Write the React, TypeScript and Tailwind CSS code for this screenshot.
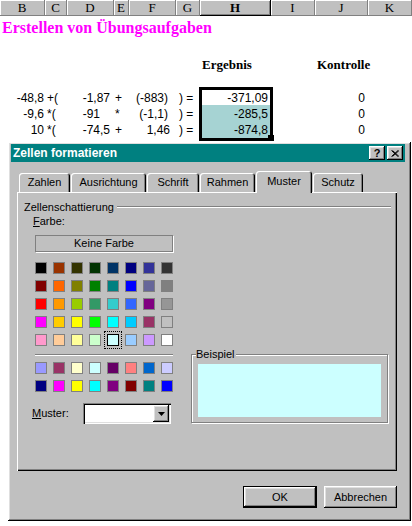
const palette = [
  ["#000000", "#993300", "#333300", "#003300", "#003366", "#000080", "#333399", "#333333"],
  ["#800000", "#ff6600", "#808000", "#008000", "#008080", "#0000ff", "#666699", "#808080"],
  ["#ff0000", "#ff9900", "#99cc00", "#339966", "#33cccc", "#3366ff", "#800080", "#969696"],
  ["#ff00ff", "#ffcc00", "#ffff00", "#00ff00", "#00ffff", "#00ccff", "#993366", "#c0c0c0"],
  ["#ff99cc", "#ffcc99", "#ffff99", "#ccffcc", "#ccffff", "#99ccff", "#cc99ff", "#ffffff"],
];

const extra = [
  ["#9999ff", "#993366", "#ffffcc", "#ccffff", "#660066", "#ff8080", "#0066cc", "#ccccff"],
  ["#000080", "#ff00ff", "#ffff00", "#00ffff", "#800080", "#800000", "#008080", "#0000ff"],
];

const raised =
  "shadow-[inset_-1px_-1px_#000,inset_1px_1px_#fff,inset_-2px_-2px_#808080,inset_2px_2px_#dfdfdf]";

const rows = [
  { h: "h-[15px]", b: "-48,8", c: "+(", d: "-1,87", dPad: "pr-[4px]", e: "+", f: "(-883)", fPad: "pr-[8px]", res: "-371,09", fill: "bg-white" },
  { h: "h-[17px]", b: "-9,6", c: "*(", d: "-91", dPad: "pr-[14px]", e: "*", f: "(-1,1)", fPad: "pr-[8px]", res: "-285,5", fill: "bg-[#a6d3d3]" },
  { h: "h-[16px]", b: "10", c: "*(", d: "-74,5", dPad: "pr-[4px]", e: "+", f: "1,46", fPad: "pr-[6px]", res: "-874,8", fill: "bg-[#a6d3d3]" },
];

function HeaderCell({ label, w, active }: { label: string; w: string; active?: boolean }) {
  return (
    <div
      className={`${w} flex h-[16px] items-center justify-center border-r border-b text-[13px] ${
        active
          ? "border-black font-bold shadow-[inset_1px_1px_#fff,inset_-1px_-1px_#808080]"
          : "border-[#808080] shadow-[inset_1px_1px_#fff]"
      }`}
    >
      {label}
    </div>
  );
}

function Sheet() {
  return (
    <div className="font-['Liberation_Serif',serif] text-black">
      <div className="flex h-[16px] bg-[#c0c0c0]">
        <HeaderCell label="B" w="w-[45px]" />
        <HeaderCell label="C" w="w-[22px]" />
        <HeaderCell label="D" w="w-[47px]" />
        <HeaderCell label="E" w="w-[15px]" />
        <HeaderCell label="F" w="w-[47px]" />
        <HeaderCell label="G" w="w-[24px]" />
        <HeaderCell label="H" w="w-[71px]" active />
        <HeaderCell label="I" w="w-[44px]" />
        <HeaderCell label="J" w="w-[53px]" />
        <HeaderCell label="K" w="w-[44px]" />
      </div>
      <div className="flex h-[23px] items-center pl-[2px] text-[16px] font-bold text-[#ff00ff]">
        Erstellen von Übungsaufgaben
      </div>
      <div className="h-[17px]" />
      <div className="flex h-[17px] items-center text-[13px] font-bold">
        <div className="w-[202px]" />
        <span className="w-[115px]">Ergebnis</span>
        <span>Kontrolle</span>
      </div>
      <div className="h-[14px]" />

      {/* data block */}
      <div className="flex font-['Liberation_Sans',sans-serif] text-[12px]">
        <div className="w-[199px] pt-[3px]">
          {rows.map((r) => (
            <div key={r.b} className={`flex ${r.h} items-center`}>
              <span className="w-[45px] pr-[1px] text-right">{r.b}</span>
              <span className="w-[22px] pl-[2px]">{r.c}</span>
              <span className={`w-[47px] text-right ${r.dPad}`}>{r.d}</span>
              <span className="w-[15px] pl-[1px]">{r.e}</span>
              <span className={`w-[47px] text-right ${r.fPad}`}>{r.f}</span>
              <span className="w-[23px] pl-[3px]">) =</span>
            </div>
          ))}
        </div>
        <div className="relative w-[74px] border-[3px] border-black">
          {rows.map((r) => (
            <div key={r.res} className={`flex ${r.h} items-center justify-end pr-[2px] ${r.fill}`}>
              {r.res}
            </div>
          ))}
          <div className="absolute right-[-4px] bottom-[-3px] h-[6px] w-[6px] bg-black" />
        </div>
        <div className="w-[42px]" />
        <div className="w-[53px] pt-[3px]">
          {rows.map((r) => (
            <div key={r.d} className={`flex ${r.h} items-center justify-end pr-[3px]`}>
              0
            </div>
          ))}
        </div>
      </div>
    </div>
  );
}

function Swatch({ color, selected }: { color: string; selected?: boolean }) {
  return (
    <div
      className={`h-[12px] w-[12px] border ${
        selected ? "border-black outline-1 outline-offset-[2px] outline-dotted outline-black" : "border-[#808080]"
      }`}
      style={{ backgroundColor: color }}
    />
  );
}

function Tab({ label, w, active }: { label: string; w: string; active?: boolean }) {
  return (
    <div
      className={`${w} flex items-center justify-center rounded-t-[3px] bg-[#c0c0c0] shadow-[inset_1px_1px_#fff,inset_-1px_0_#000,inset_-2px_0_#808080] ${
        active ? "relative z-10 -mb-[1px] h-[22px] pb-[1px]" : "h-[19px]"
      }`}
    >
      {label}
    </div>
  );
}

function Dialog() {
  return (
    <div
      className={`absolute left-[8px] top-[142px] flex h-[379px] w-[403px] flex-col bg-[#c0c0c0] pt-[2px] pr-[6px] pl-[3px] font-['Liberation_Sans',sans-serif] text-[11px] text-black ${raised}`}
    >
      {/* title bar */}
      <div className="flex h-[18px] items-center justify-between bg-[#008080] pr-[2px] pl-[2px]">
        <span className="text-[12px] font-bold text-white">Zellen formatieren</span>
        <div className="flex gap-[2px]">
          <div className={`flex h-[14px] w-[16px] items-center justify-center bg-[#c0c0c0] text-[11px] font-bold ${raised}`}>
            ?
          </div>
          <div className={`flex h-[14px] w-[16px] items-center justify-center bg-[#c0c0c0] ${raised}`}>
            <svg width="8" height="7" viewBox="0 0 8 7">
              <path d="M0.5 0.5 L7 6.5 M1.5 0.5 L8 6.5 M7 0.5 L0.5 6.5 M8 0.5 L1.5 6.5" stroke="#000" strokeWidth="1" />
            </svg>
          </div>
        </div>
      </div>

      {/* tabs */}
      <div className="mt-[9px] flex h-[21px] items-end gap-[1px] pl-[8px]">
        <Tab label="Zahlen" w="w-[51px]" />
        <Tab label="Ausrichtung" w="w-[75px]" />
        <Tab label="Schrift" w="w-[52px]" />
        <Tab label="Rahmen" w="w-[55px]" />
        <Tab label="Muster" w="w-[56px]" active />
        <Tab label="Schutz" w="w-[50px]" />
      </div>

      {/* panel */}
      <div className="ml-[6px] h-[279px] w-[380px] pt-[8px] shadow-[inset_1px_1px_#fff,inset_-1px_-1px_#000,inset_-2px_-2px_#808080]">
        <div className="flex h-[14px] items-center pr-[6px] pl-[7px]">
          <span>Zellenschattierung</span>
          <div className="ml-[3px] h-[2px] flex-1 border-t border-b border-t-[#808080] border-b-white" />
        </div>
        <div className="flex">
          <div className="w-[174px] pl-[16px]">
            <div className="h-[14px] leading-[14px]">
              <span className="underline">F</span>arbe:
            </div>
            <div className="mt-[7px] ml-[2px] flex h-[17px] w-[138px] items-center justify-center border border-[#808080] shadow-[1px_1px_#fff]">
              Keine Farbe
            </div>
            <div className="mt-[10px] ml-[2px] grid w-[138px] grid-cols-8 gap-[6px]">
              {palette.map((row, i) =>
                row.map((c, j) => <Swatch key={`${i}-${j}`} color={c} selected={i === 4 && j === 4} />)
              )}
            </div>
            <div className="mt-[8px] ml-[2px] h-[2px] w-[138px] border-t border-b border-t-[#808080] border-b-white" />
            <div className="mt-[6px] ml-[2px] grid w-[138px] grid-cols-8 gap-[6px]">
              {extra.map((row, i) => row.map((c, j) => <Swatch key={`e${i}-${j}`} color={c} />))}
            </div>
            <div className="mt-[11px] flex items-center">
              <span className="-ml-[1px] w-[51px]">
                <span className="underline">M</span>uster:
              </span>
              <div className="relative h-[21px] w-[88px] bg-white shadow-[inset_1px_1px_#808080,inset_2px_2px_#000,inset_-1px_-1px_#fff,inset_-2px_-2px_#dfdfdf]">
                <div className={`absolute top-[2px] right-[2px] bottom-[2px] flex w-[16px] items-center justify-center bg-[#c0c0c0] ${raised}`}>
                  <svg width="7" height="4" viewBox="0 0 7 4">
                    <path d="M0 0 H7 L3.5 4 Z" fill="#000" />
                  </svg>
                </div>
              </div>
            </div>
          </div>
          <div className="mt-[140px]">
            <div className="relative h-[69px] w-[197px] border border-[#808080] px-[6px] pt-[9px] shadow-[1px_1px_#fff,inset_1px_1px_#fff]">
              <span className="absolute top-[-8px] left-[4px] bg-[#c0c0c0] pr-[1px] leading-[14px]">Beispiel</span>
              <div className="h-[53px] w-[183px] bg-[#ccffff]" />
            </div>
          </div>
        </div>
      </div>

      {/* buttons */}
      <div className="mt-[15px] flex justify-end gap-[7px] pr-[8px]">
        <div className="h-[22px] w-[74px] border border-black">
          <div className={`flex h-full w-full items-center justify-center bg-[#c0c0c0] ${raised}`}>OK</div>
        </div>
        <div className={`flex h-[22px] w-[73px] items-center justify-center bg-[#c0c0c0] ${raised}`}>Abbrechen</div>
      </div>
    </div>
  );
}

export default function App() {
  return (
    <div className="relative h-[526px] w-[412px] overflow-hidden bg-white">
      <Sheet />
      <Dialog />
    </div>
  );
}
